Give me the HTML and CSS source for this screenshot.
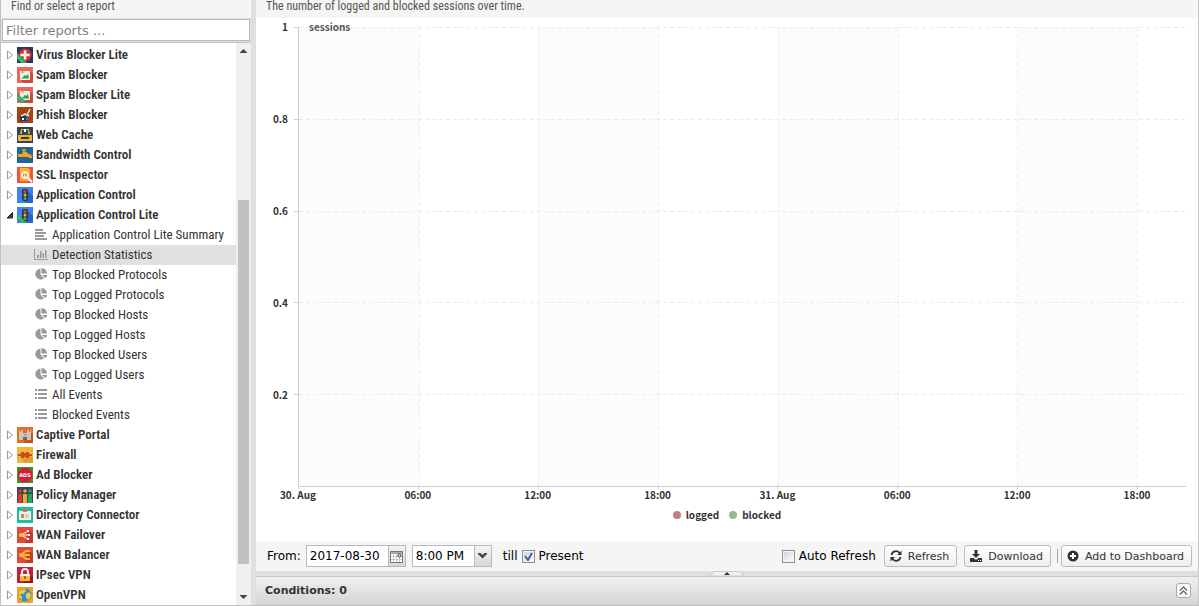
FILE: index.html
```html
<!DOCTYPE html>
<html lang="en">
<head>
  <meta charset="UTF-8" />
  <meta name="viewport" content="width=device-width, initial-scale=1" />
  <title>Reports</title>
  <link rel="stylesheet" href="styles.css">
</head>
<body>
  <!-- shared icons -->
  <svg class="sprite" aria-hidden="true">
    <symbol id="arrow" viewBox="0 0 8 10"><path d="M1.5 1v8l5-4z" fill="#fff" stroke="#999"/></symbol>
    <symbol id="arrow-open" viewBox="0 0 8 10"><path d="M1 8L6.5 2.5V8z" fill="#444" stroke="#222"/></symbol>
    <symbol id="align" viewBox="0 0 14 12"><path d="M1 2h8M1 5h11M1 8h9M1 11h12" stroke="#999" stroke-width="2"/></symbol>
    <symbol id="bars" viewBox="0 0 14 12"><path d="M.5 1v10.500H14" fill="none" stroke="#999"/><path d="M3 7h2v3H3zM6 3h1.500v7H6zM8.500 5H10v5H8.500zM11 2h1.500v8H11z" fill="#999"/></symbol>
    <symbol id="pie" viewBox="0 0 14 12"><path d="M6.500 .5V6.500L10 10.500A5.500 5.500 0 1 1 6.500 .5z" fill="#999"/><path d="M7.500 0A5.500 5.500 0 0 1 13 5.500H7.500zM8 7h5a5 5 0 0 1-1.500 3.300z" fill="#999"/></symbol>
    <symbol id="list" viewBox="0 0 14 12"><path d="M1 2h2M1 6h2M1 10h2M4 2h9M4 6h9M4 10h9" stroke="#999" stroke-width="2"/></symbol>
    <symbol id="lite" viewBox="0 0 16 16"><path d="M0 6l10 10H4l-4-4z" fill="#2fa866"/><path d="M1 10l5 5" stroke="#9be0b5" stroke-dasharray="1 1"/></symbol>
    <symbol id="virus" viewBox="0 0 16 16"><path d="M0 0h16v16H0z" fill="#203a5c"/><circle cx="8" cy="8" r="6.500" fill="#d8322f"/><path d="M8 3.500v9M3.500 8h9" stroke="#fff" stroke-width="2.500"/></symbol>
    <symbol id="spam" viewBox="0 0 16 16"><path d="M0 0h16v16H0z" fill="#e9675d"/><path d="M12 3l4 4v9H7l-4-4z" fill="#ce4740"/><path d="M3 4h10v9H3z" fill="#f4eee0"/><path d="M4.500 5h7v6.500h-7z" fill="#dff0e8"/><path d="M4.500 11.500L8 8l1.500 1L11 7l1 4.500z" fill="#319f48"/><circle cx="5.500" cy="5" r="1.200" fill="#e6a23c"/></symbol>
    <symbol id="phish" viewBox="0 0 16 16"><path d="M0 0h16v16H0z" fill="#a8420f"/><path d="M3 9h8v5H3z" fill="#203a5c"/><path d="M4 9l4-2 4 2M10 8l3-6" fill="none" stroke="#dde6ea" stroke-width="1.500"/><path d="M5 11h2v2H5z" fill="#fff"/><path d="M10 8l1 5H9z" fill="#4b91c1"/></symbol>
    <symbol id="cache" viewBox="0 0 16 16"><path d="M0 0h16v16H0z" fill="#29465e"/><path d="M4 2h8l1 5H3z" fill="#edaa2c"/><path d="M5 3h6v4H5z" fill="#29465e"/><path d="M7 2h2v3H7z" fill="#fff"/><path d="M1 8h14v6H1z" fill="#f5b335"/><path d="M4 10h8v2H4z" fill="#34383b"/></symbol>
    <symbol id="bandwidth" viewBox="0 0 16 16"><path d="M0 0h16v16H0z" fill="#216698"/><path d="M1 7h4l1-2h4l1 2h1q3 0 3 4h-3q0-1-2-1H1z" fill="#f3a51e"/><path d="M7 5V3M5 3h4" stroke="#f3a51e" stroke-width="1.500"/></symbol>
    <symbol id="ssl" viewBox="0 0 16 16"><path d="M0 0h16v16H0z" fill="#f45343"/><path d="M3 1h8l2 2v11H3z" fill="#f6b82e"/><circle cx="8" cy="8" r="4.500" fill="#fff3df" stroke="#ed9c3b"/><path d="M6 6.500h1.500v3H6zM8.500 6.500H10v3H8.500z" fill="#e98d37"/><path d="M11 11l4 4" stroke="#fff" stroke-width="2"/></symbol>
    <symbol id="app" viewBox="0 0 16 16"><path d="M0 0h16v16H0z" fill="#3d83f2"/><path d="M10 3l6 6v7H9l-3-4z" fill="#2862cb"/><rect x="5" y="2" width="6" height="12" rx="2" fill="#2e3842"/><circle cx="8" cy="4.500" r="1.500" fill="#e44338"/><circle cx="8" cy="8" r="1.500" fill="#eeb62b"/><circle cx="8" cy="11.500" r="1.500" fill="#33b567"/></symbol>
    <symbol id="captive" viewBox="0 0 16 16"><path d="M0 0h16v16H0z" fill="#e96c20"/><path d="M11 3l5 5v8H7z" fill="#c95317"/><path d="M2 3h1v2h1V3h2v3h4V3h2v2h1V3h1v10H2z" fill="#cbc5be"/><path d="M6 13v-3h4v3z" fill="#73645b"/><path d="M7 8h2" stroke="#837970"/></symbol>
    <symbol id="firewall" viewBox="0 0 16 16"><path d="M0 0h16v16H0z" fill="#efb53e"/><path d="M13 9l3 2v5H8l-4-5z" fill="#dea12f"/><path d="M1 7h3V5h8v2h3v2h-3v2H4V9H1z" fill="#cf4b1e"/><path d="M7 5h2v1H7zM7 10h2v1H7z" fill="#efb53e"/></symbol>
    <symbol id="ads" viewBox="0 0 16 16"><path d="M0 0h16v16H0z" fill="#4d8a27"/><path d="M5 1h6l4 4v6l-4 4H5l-4-4V5z" fill="#cb2037"/><text x="8" y="10" text-anchor="middle" class="ads-text">ADS</text></symbol>
    <symbol id="policy" viewBox="0 0 16 16"><path d="M0 0h16v16H0z" fill="#384553"/><path d="M1 7h4v9H1z" fill="#d33b32"/><path d="M6 7h4v9H6z" fill="#e9ad2c"/><path d="M11 7h4v9h-4z" fill="#21a56b"/><circle cx="3" cy="4" r="1.800" fill="#d33b32"/><circle cx="8" cy="4" r="1.800" fill="#e9ad2c"/><circle cx="13" cy="4" r="1.800" fill="#21a56b"/></symbol>
    <symbol id="directory" viewBox="0 0 16 16"><path d="M0 0h16v16H0z" fill="#1bbfa4"/><path d="M2 4h12v9H2z" fill="#f4efe3"/><path d="M6 2h4v3H6z" fill="#e36d48"/><path d="M4 7h3v4H4z" fill="#b18d6e"/><path d="M8 8h4M8 10h4" stroke="#b9b4aa"/></symbol>
    <symbol id="wan" viewBox="0 0 16 16"><path d="M0 0h16v16H0z" fill="#e14a3b"/><path d="M12 4l4 3v9H8z" fill="#c5362d"/></symbol>
    <symbol id="ipsec" viewBox="0 0 16 16"><path d="M0 0h16v16H0z" fill="#c51e3a"/><path d="M12 6l4 4v6H6z" fill="#9e142c"/><path d="M5 8V5a3 3 0 0 1 6 0v3" fill="none" stroke="#eee" stroke-width="2"/><path d="M3 7h10v7H3z" fill="#f7bd3b"/><path d="M3 7h10v2H3z" fill="#fff1c9"/><path d="M8 9v3" stroke="#a66e22" stroke-width="2"/></symbol>
    <symbol id="openvpn" viewBox="0 0 16 16"><path d="M0 0h16v16H0z" fill="#f3a322"/><circle cx="8" cy="8" r="6.500" fill="#2d8fd7"/><path d="M4 3l4-1 1 2-3 3H3l2 3v3L2 10V5zM9 7l3-2 2 3-1 3-2 2-2-3z" fill="#f5cb39"/></symbol>
  </svg>

  <div class="layout">
    <aside class="sidebar">
      <div class="panel-title">Find or select a report</div>
      <div class="filter">
        <input type="text" placeholder="Filter reports ..." aria-label="Filter reports" />
      </div>
      <div class="tree-wrap">
        <ul class="tree">
          <li><a href="#"><svg class="expander"><use href="#arrow"/></svg><svg class="app-icon"><use href="#virus"/><use href="#lite"/></svg>Virus Blocker Lite</a></li>
          <li><a href="#"><svg class="expander"><use href="#arrow"/></svg><svg class="app-icon"><use href="#spam"/></svg>Spam Blocker</a></li>
          <li><a href="#"><svg class="expander"><use href="#arrow"/></svg><svg class="app-icon"><use href="#spam"/><use href="#lite"/></svg>Spam Blocker Lite</a></li>
          <li><a href="#"><svg class="expander"><use href="#arrow"/></svg><svg class="app-icon"><use href="#phish"/></svg>Phish Blocker</a></li>
          <li><a href="#"><svg class="expander"><use href="#arrow"/></svg><svg class="app-icon"><use href="#cache"/></svg>Web Cache</a></li>
          <li><a href="#"><svg class="expander"><use href="#arrow"/></svg><svg class="app-icon"><use href="#bandwidth"/></svg>Bandwidth Control</a></li>
          <li><a href="#"><svg class="expander"><use href="#arrow"/></svg><svg class="app-icon"><use href="#ssl"/></svg>SSL Inspector</a></li>
          <li><a href="#"><svg class="expander"><use href="#arrow"/></svg><svg class="app-icon"><use href="#app"/></svg>Application Control</a></li>
          <li>
            <a href="#"><svg class="expander"><use href="#arrow-open"/></svg><svg class="app-icon"><use href="#app"/><use href="#lite"/></svg>Application Control Lite</a>
            <ul class="reports">
              <li><a href="#"><svg><use href="#align"/></svg>Application Control Lite Summary</a></li>
              <li><a href="#" class="selected"><svg><use href="#bars"/></svg>Detection Statistics</a></li>
              <li><a href="#"><svg><use href="#pie"/></svg>Top Blocked Protocols</a></li>
              <li><a href="#"><svg><use href="#pie"/></svg>Top Logged Protocols</a></li>
              <li><a href="#"><svg><use href="#pie"/></svg>Top Blocked Hosts</a></li>
              <li><a href="#"><svg><use href="#pie"/></svg>Top Logged Hosts</a></li>
              <li><a href="#"><svg><use href="#pie"/></svg>Top Blocked Users</a></li>
              <li><a href="#"><svg><use href="#pie"/></svg>Top Logged Users</a></li>
              <li><a href="#"><svg><use href="#list"/></svg>All Events</a></li>
              <li><a href="#"><svg><use href="#list"/></svg>Blocked Events</a></li>
            </ul>
          </li>
          <li><a href="#"><svg class="expander"><use href="#arrow"/></svg><svg class="app-icon"><use href="#captive"/></svg>Captive Portal</a></li>
          <li><a href="#"><svg class="expander"><use href="#arrow"/></svg><svg class="app-icon"><use href="#firewall"/></svg>Firewall</a></li>
          <li><a href="#"><svg class="expander"><use href="#arrow"/></svg><svg class="app-icon"><use href="#ads"/></svg>Ad Blocker</a></li>
          <li><a href="#"><svg class="expander"><use href="#arrow"/></svg><svg class="app-icon"><use href="#policy"/></svg>Policy Manager</a></li>
          <li><a href="#"><svg class="expander"><use href="#arrow"/></svg><svg class="app-icon"><use href="#directory"/></svg>Directory Connector</a></li>
          <li><a href="#"><svg class="expander"><use href="#arrow"/></svg><svg class="app-icon" viewBox="0 0 16 16"><use href="#wan"/><path d="M4 8l7-4M4 8h8M4 8l7 4" stroke="#fff"/><circle cx="4" cy="8" r="2" fill="#f6c044"/><path d="M10 3h2v2h-2zM11 7h2v2h-2zM10 11h2v2h-2z" fill="#fff"/></svg>WAN Failover</a></li>
          <li><a href="#"><svg class="expander"><use href="#arrow"/></svg><svg class="app-icon" viewBox="0 0 16 16"><use href="#wan"/><path d="M13 4H9L4 8l5 4h4M4 8h9" fill="none" stroke="#f6b12e" stroke-width="2"/><circle cx="4" cy="8" r="2" fill="#f6b12e"/></svg>WAN Balancer</a></li>
          <li><a href="#"><svg class="expander"><use href="#arrow"/></svg><svg class="app-icon"><use href="#ipsec"/></svg>IPsec VPN</a></li>
          <li><a href="#"><svg class="expander"><use href="#arrow"/></svg><svg class="app-icon"><use href="#openvpn"/></svg>OpenVPN</a></li>
        </ul>
        <div class="scrollbar">
          <svg viewBox="0 0 14 16"><path d="M3 10l4-4 4 4z" fill="#444"/></svg>
          <div class="track"><div class="thumb"></div></div>
          <svg viewBox="0 0 14 16"><path d="M3 6l4 4 4-4z" fill="#444"/></svg>
        </div>
      </div>
    </aside>

    <main class="content">
      <div class="panel-title">The number of logged and blocked sessions over time.</div>

      <div class="chart">
        <div class="y-axis">
          <span>1</span><span>0.8</span><span>0.6</span><span>0.4</span><span>0.2</span>
        </div>
        <div class="plot">
          <div class="band"></div>
          <div class="band"></div>
          <div class="band"></div>
          <div class="band"></div>
          <div class="band"></div>
          <div class="band"></div>
          <div class="band"></div>
          <div class="band last"></div>
          <div class="grid-lines"><i></i><i></i><i></i><i></i><i></i></div>
          <span class="y-title">sessions</span>
        </div>
        <div class="x-axis">
          <div><span>30. Aug</span></div>
          <div><span>06:00</span></div>
          <div><span>12:00</span></div>
          <div><span>18:00</span></div>
          <div><span>31. Aug</span></div>
          <div><span>06:00</span></div>
          <div><span>12:00</span></div>
          <div class="last"><span>18:00</span></div>
        </div>
        <div class="legend">
          <span class="logged">logged</span>
          <span class="blocked">blocked</span>
        </div>
      </div>

      <div class="toolbar">
        <label for="from-date">From:</label>
        <div class="field date">
          <input type="text" id="from-date" value="2017-08-30" />
          <button class="trigger" aria-label="Pick a date">
            <svg width="13" height="13" viewBox="0 0 13 13"><path d="M.5 1.500h12v11H.5z" fill="#fff" stroke="#777"/><path d="M1 2h11v2H1z" fill="#aaa"/><path d="M1 6.500h11M1 9.500h11M3.500 4v8M6.500 4v8M9.500 4v8" stroke="#ccc"/><circle cx="9.500" cy="5.500" r="1.500" fill="#fff" stroke="#222"/></svg>
          </button>
        </div>
        <div class="field time">
          <select aria-label="From time"><option>8:00 PM</option></select>
          <span class="trigger"><svg width="9" height="6" viewBox="0 0 9 6"><path d="M0 0h2.500l2 2 2-2H9v1L4.500 5.500 0 1z" fill="#444"/></svg></span>
        </div>
        <label for="present">till</label>
        <input type="checkbox" id="present" checked />
        <label for="present">Present</label>

        <div class="actions">
          <input type="checkbox" id="auto-refresh" />
          <label for="auto-refresh">Auto Refresh</label>
          <button class="btn">
            <svg viewBox="0 0 12 12"><path d="M1.500 5A4.500 4.500 0 0 1 9.500 3M10.500 7A4.500 4.500 0 0 1 2.500 9" fill="none" stroke="#333" stroke-width="1.800"/><path d="M11.500.5V5H7zM.5 11.500V7H5z" fill="#333"/></svg>
            Refresh
          </button>
          <button class="btn">
            <svg viewBox="0 0 12 12"><path d="M4.500 0h3v4H10L6 8 2 4h2.500zM0 8h3.500L6 10l2.500-2H12v4H0z" fill="#333"/><path d="M8 10.500h1M10 10.500h1" stroke="#fff"/></svg>
            Download
          </button>
          <div class="separator"></div>
          <button class="btn">
            <svg viewBox="0 0 12 12"><circle cx="6" cy="6" r="5.500" fill="#333"/><path d="M6 3v6M3 6h6" stroke="#fff" stroke-width="2"/></svg>
            Add to Dashboard
          </button>
        </div>
      </div>

      <div class="splitter">
        <svg viewBox="0 0 34 5"><path d="M0 5L4 .5h26L34 5z" fill="#f1f1f1" stroke="#ccc"/><path d="M14 4l3-3 3 3z" fill="#333"/></svg>
      </div>

      <div class="conditions">
        <span>Conditions: 0</span>
        <button aria-label="Expand conditions">
          <svg width="9" height="9" viewBox="0 0 9 9"><path d="M1 4.500l3.500-3.500L8 4.500M1 8.500L4.500 5 8 8.500" fill="none" stroke="#666" stroke-width="1.300"/></svg>
        </button>
      </div>
    </main>
  </div>
</body>
</html>
```

FILE: styles.css
```css
* {
  box-sizing: border-box;
}

body {
  margin: 0;
  background: #dfdfdf;
  color: #333;
  font-family: "Roboto Condensed", Roboto, sans-serif;
  font-size: 13px;
}

ul {
  list-style: none;
  margin: 0;
  padding: 0;
}

button,
input,
select {
  font-family: "DejaVu Sans", sans-serif;
  margin: 0;
}

.sprite {
  display: none;
}

.layout {
  display: flex;
  gap: 5px;
  height: 100vh;
  border-left: 1px solid #c0c0c0;
  border-bottom: 1px solid #c0c0c0;
}

.panel-title {
  flex: none;
  height: 18px;
  padding: 0 10px;
  line-height: 13px;
  font-size: 12px;
  color: #555;
  background: #f5f5f5;
}

/* Sidebar */
.sidebar {
  flex: none;
  display: flex;
  flex-direction: column;
  width: 250px;
  background: #fff;
}

.filter {
  padding: 1px;
  background: #e0e0e0;
  border-bottom: 1px solid #c0c0c0;
}

.filter input {
  display: block;
  width: 100%;
  height: 22px;
  padding: 0 3px;
  border: 1px solid #b5b8c8;
  border-radius: 0;
  font-size: 13px;
}

.filter input::placeholder {
  color: #808080;
}

.tree-wrap {
  flex: 1;
  display: flex;
  min-height: 0;
}

.tree {
  flex: 1;
  padding-top: 2px;
  overflow: hidden;
}

.tree a {
  display: flex;
  align-items: center;
  height: 20px;
  padding: 0 0 2px 5px;
  color: #333;
  font-weight: 600;
  text-decoration: none;
  white-space: nowrap;
}

.expander {
  width: 8px;
  height: 10px;
  margin: 2px 3px 0 0;
}

.app-icon {
  width: 16px;
  height: 16px;
  margin: 2px 3px 0 0;
}

.ads-text {
  font: 700 5px "DejaVu Sans", sans-serif;
  fill: #fff;
}

.tree .reports a {
  padding-left: 33px;
  font-weight: 400;
}

.reports svg {
  width: 14px;
  height: 12px;
  margin-right: 4px;
}

.tree .reports .selected {
  background: #e0e0e0;
}

.scrollbar {
  display: flex;
  flex-direction: column;
  width: 15px;
  background: #f0f0f0;
}

.scrollbar svg {
  height: 16px;
}

.track {
  flex: 1;
  display: flex;
  flex-direction: column;
  justify-content: flex-end;
  padding: 0 2px 25px;
}

.thumb {
  height: 72%;
  background: #c1c1c1;
}

/* Report */
.content {
  flex: 1;
  display: flex;
  flex-direction: column;
  min-width: 0;
  border-right: 1px solid #c8c8c8;
}

.chart {
  flex: 1;
  display: grid;
  grid-template-columns: 42px 1fr;
  grid-template-rows: 1fr 20px 34px;
  padding: 9px 12px 0 0;
  background: #fff;
  font-family: "Noto Sans CJK JP", sans-serif;
  font-size: 10px;
  font-weight: 700;
}

.y-axis {
  display: flex;
  flex-direction: column;
  padding-right: 10px;
  text-align: right;
}

.y-axis span {
  flex: 1;
  margin-top: -8px;
  margin-bottom: 8px;
  line-height: 16px;
}

.plot {
  position: relative;
  display: flex;
  border-left: 1px solid #c0d0e0;
  border-bottom: 1px solid #c0d0e0;
}

.band,
.x-axis div {
  flex: 120;
}

.band.last,
.x-axis .last {
  flex: 49;
}

.band:nth-child(odd) {
  background: #fcfcfc;
}

.band + .band {
  background-image: repeating-linear-gradient(#ebebeb 0 4px, transparent 4px 7px);
  background-size: 1px 100%;
  background-repeat: no-repeat;
}

.grid-lines {
  position: absolute;
  inset: 0 0 0 -5px;
  display: flex;
  flex-direction: column;
}

.grid-lines i {
  flex: 1;
  background:
    linear-gradient(#c0d0e0, #c0d0e0) 0 0 / 5px 1px no-repeat,
    repeating-linear-gradient(90deg, #ebebeb 0 4px, transparent 4px 7px) 5px 0 / 100% 1px no-repeat;
}

.y-title {
  position: absolute;
  top: -8px;
  left: 7px;
  padding: 0 3px;
  line-height: 16px;
  color: #555;
}

.x-axis {
  grid-column: 2;
  display: flex;
}

.x-axis div {
  background: linear-gradient(#c0d0e0, #c0d0e0) 0 0 / 1px 2px no-repeat;
}

.x-axis span {
  display: block;
  width: 80px;
  margin-left: -40px;
  line-height: 16px;
  text-align: center;
}

.legend {
  grid-column: 1 / 3;
  display: flex;
  justify-content: center;
  gap: 10px;
  margin-right: -12px;
  line-height: 16px;
}

.legend span::before {
  content: "";
  display: inline-block;
  width: 8px;
  height: 8px;
  margin-right: 5px;
  border-radius: 50%;
  background: #c77c7c;
}

.legend .blocked::before {
  background: #9bb792;
}

/* Toolbar */
.toolbar {
  flex: none;
  display: flex;
  align-items: center;
  height: 30px;
  padding: 0 6px 0 11px;
  background: #f5f5f5;
  color: #000;
  font-family: "DejaVu Sans", sans-serif;
  font-size: 12px;
  white-space: nowrap;
}

.field {
  display: flex;
  height: 22px;
  margin-left: 6px;
  border: 1px solid #b5b8c8;
  background: #fff;
}

.field.date {
  width: 100px;
  margin-left: 5px;
}

.field.time {
  position: relative;
  width: 80px;
  margin-right: 11px;
}

.field input,
.field select {
  flex: 1;
  min-width: 0;
  padding: 0 3px;
  border: 0;
  background: none;
  color: #000;
  font-size: 12px;
  appearance: none;
}

.trigger {
  flex: none;
  display: flex;
  align-items: center;
  justify-content: center;
  width: 17px;
  padding: 0;
  border: 0;
  border-left: 1px solid #b5b8c8;
  background: linear-gradient(#f4f4f4, #d8d8d8);
}

.time .trigger {
  pointer-events: none;
}

.toolbar input[type="checkbox"] {
  appearance: none;
  width: 13px;
  height: 13px;
  margin: 0 4px;
  border: 1px solid #8e8f8f;
  background: linear-gradient(135deg, #cfd3d8, #fff);
  box-shadow: inset 0 0 0 1px #f4f4f4;
}

.toolbar input[type="checkbox"]:checked {
  background:
    url("data:image/svg+xml,%3Csvg xmlns='http://www.w3.org/2000/svg' viewBox='0 0 11 11'%3E%3Cpath d='M2 5l3 4 4-7' fill='none' stroke='%23405c9c' stroke-width='2'/%3E%3C/svg%3E"),
    linear-gradient(135deg, #cfd3d8, #fff);
}

.actions {
  display: flex;
  align-items: center;
  margin-left: auto;
}

.actions label {
  margin-right: 8px;
}

.btn {
  display: flex;
  align-items: center;
  gap: 6px;
  height: 22px;
  padding: 0 7px 0 5px;
  border: 1px solid #bbb;
  border-radius: 3px;
  background: linear-gradient(#fff, #eee);
  color: #333;
  font-size: 11px;
}

.btn + .btn {
  margin-left: 7px;
}

.btn svg {
  width: 12px;
  height: 12px;
}

.separator {
  width: 1px;
  height: 14px;
  margin: 0 3px 0 6px;
  background: #aca899;
}

.splitter {
  flex: none;
  display: flex;
  justify-content: center;
  height: 5px;
  background: #dfdfdf;
}

.splitter svg {
  width: 34px;
}

.conditions {
  flex: none;
  display: flex;
  align-items: center;
  justify-content: space-between;
  height: 29px;
  padding: 0 7px 2px 9px;
  border-top: 1px solid #c8c8c8;
  background: linear-gradient(#f0f0f0, #d4d4d4);
  font-family: "DejaVu Sans", sans-serif;
  font-size: 11px;
  font-weight: 700;
}

.conditions button {
  display: flex;
  align-items: center;
  justify-content: center;
  width: 15px;
  height: 15px;
  padding: 0;
  border: 1px solid #aaa;
  border-radius: 3px;
  background: #f8f8f8;
}
```
